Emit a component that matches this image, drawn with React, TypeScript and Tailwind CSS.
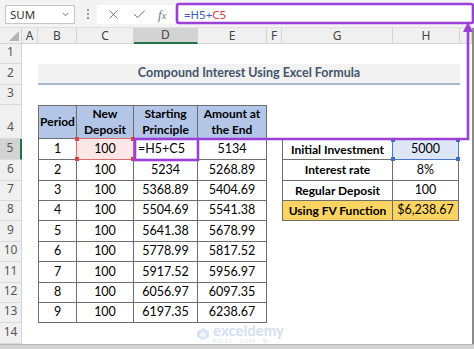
import React from "react";
import { X, Check, ChevronDown } from "lucide-react";

const font = { fontFamily: "Lato, 'Liberation Sans', sans-serif" };
const uiFont = { fontFamily: "'Noto Sans', 'Open Sans', sans-serif" };

const letters = ["A", "B", "C", "D", "E", "F", "G", "H", ""];
const colStart = [
  "col-start-2",
  "col-start-3",
  "col-start-4",
  "col-start-5",
  "col-start-6",
  "col-start-7",
  "col-start-8",
  "col-start-9",
  "col-start-10",
];
const rowStart = [
  "row-start-2",
  "row-start-3",
  "row-start-4",
  "row-start-5",
  "row-start-6",
  "row-start-7",
  "row-start-8",
  "row-start-9",
  "row-start-10",
  "row-start-11",
  "row-start-12",
  "row-start-13",
  "row-start-14",
  "row-start-15",
];

const data = [
  ["1", "100", "=H5+C5", "5134"],
  ["2", "100", "5234", "5268.89"],
  ["3", "100", "5368.89", "5404.69"],
  ["4", "100", "5504.69", "5541.38"],
  ["5", "100", "5641.38", "5678.99"],
  ["6", "100", "5778.99", "5817.52"],
  ["7", "100", "5917.52", "5956.97"],
  ["8", "100", "6056.97", "6097.35"],
  ["9", "100", "6197.35", "6238.67"],
];

const cell = "border-r border-b border-[#6e6e6e] flex items-center justify-center";

// little squares on the corners of a referenced cell
const Handles = ({ color }: { color: string }) => (
  <>
    <span className={`absolute -left-[2px] -top-[2px] w-[4px] h-[4px] ${color}`} />
    <span className={`absolute -right-[2px] -top-[2px] w-[4px] h-[4px] ${color}`} />
    <span className={`absolute -left-[2px] -bottom-[2px] w-[4px] h-[4px] ${color}`} />
    <span className={`absolute -right-[2px] -bottom-[2px] w-[4px] h-[4px] ${color}`} />
  </>
);

const Toolbar = () => (
  <div className="h-[28px] bg-[#f3f3f3] flex items-start pt-[5px] border-b border-[#e0e0e0]" style={uiFont}>
    <div className="ml-[5px] w-[70px] h-[19px] bg-white border border-[#c6c6c6] flex items-center justify-between px-[4px]">
      <span className="text-[11.5px] text-[#333]">SUM</span>
      <ChevronDown size={9} strokeWidth={2.5} className="text-[#666]" />
    </div>
    <div className="ml-[12px] mt-[4px] flex flex-col gap-[2px]">
      <span className="w-[2px] h-[2px] bg-[#9a9a9a]" />
      <span className="w-[2px] h-[2px] bg-[#9a9a9a]" />
      <span className="w-[2px] h-[2px] bg-[#9a9a9a]" />
    </div>
    <div className="ml-[8px] w-[80px] h-[19px] bg-white flex items-center pl-[9px] gap-[11px] text-[#666]">
      <X size={15} strokeWidth={1.4} />
      <Check size={15} strokeWidth={1.6} />
      <span className="text-[13px] italic text-[#777]" style={{ fontFamily: "'Liberation Serif', serif" }}>
        f<span className="text-[10px]">x</span>
      </span>
    </div>
    <div className="flex-1 h-[19px] bg-white flex items-center pl-[7px] text-[11.5px]">
      <span className="text-[#3b59c7]">=H5+</span>
      <span className="text-[#d8343d]">C5</span>
    </div>
  </div>
);

const MainTable = () => (
  <div
    className="col-start-3 col-end-7 row-start-5 row-end-15 grid grid-cols-[38px_57px_64px_69px] grid-rows-[33px_21px_21px_20px_20px_21px_20px_21px_20px_20px] border-l border-t border-[#6e6e6e] text-[12.5px] text-black"
    style={font}
  >
    {["Period", "New Deposit", "Starting Principle", "Amount at the End"].map((h, i) => (
      <div key={i} className={`${cell} bg-[#b4c6e7] font-bold text-[12px] text-center leading-[16px] px-[2px]`}>
        {h === "Amount at the End" ? (
          <span>
            Amount at
            <br />
            the End
          </span>
        ) : (
          h
        )}
      </div>
    ))}
    {data.map((row, r) =>
      row.map((v, c) => {
        if (r === 0 && c === 1)
          return (
            <div key={`${r}-${c}`} className="relative border-r border-b border-[#6e6e6e]">
              <div className="absolute inset-[-1px] border border-[#e06a6c] bg-[#fce6e6] flex items-center justify-center">
                {v}
                <Handles color="bg-[#d9434a]" />
              </div>
            </div>
          );
        if (r === 0 && c === 2)
          return (
            <div key={`${r}-${c}`} className={`${cell} !justify-start pl-[4px]`}>
              {v}
            </div>
          );
        return (
          <div key={`${r}-${c}`} className={cell}>
            {v}
          </div>
        );
      })
    )}
  </div>
);

const SideTable = () => (
  <div
    className="col-start-8 col-end-10 row-start-6 row-end-10 grid grid-cols-[110px_66px] grid-rows-[20px_21px_20px_20px] border-l border-t border-[#6e6e6e] text-[12.5px] text-black"
    style={font}
  >
    <div className={`${cell} font-bold text-[12px]`}>Initial Investment</div>
    <div className="relative border-r border-b border-[#6e6e6e]">
      <div className="absolute inset-[-1px] border border-[#4a78cf] bg-[#dde6f5] flex items-center justify-center">
        5000
        <Handles color="bg-[#3f6cc4]" />
      </div>
    </div>
    <div className={`${cell} font-bold text-[12px]`}>Interest rate</div>
    <div className={cell}>8%</div>
    <div className={`${cell} font-bold text-[12px]`}>Regular Deposit</div>
    <div className={cell}>100</div>
    <div className={`${cell} font-bold text-[12px] bg-[#fad462]`}>Using FV Function</div>
    <div className={`${cell} bg-[#fad462]`}>$6,238.67</div>
  </div>
);

const Sheet = () => (
  <div className="relative border-r-2 border-[#8c8c8c]">
    <div
      className="grid grid-cols-[22px_16px_39px_57px_64px_69px_15px_111px_67px_12px] grid-rows-[16px_20px_21px_20px_34px_21px_21px_20px_20px_21px_20px_21px_20px_20px_21px]"
      style={uiFont}
    >
      {/* corner */}
      <div className="col-start-1 row-start-1 bg-[#f0f0f0] border-r border-b border-[#d4d4d4] relative">
        <div
          className="absolute right-[2px] bottom-[2px] w-[10px] h-[10px] bg-[#b5b5b5]"
          style={{ clipPath: "polygon(100% 0, 100% 100%, 0 100%)" }}
        />
      </div>
      {letters.map((l, i) => (
        <div
          key={i}
          className={`${colStart[i]} row-start-1 flex items-center justify-center text-[12px] text-[#444] border-r border-[#d4d4d4] ${
            l === "D" ? "bg-[#d3d3d3] border-b-2 border-b-[#217346]" : "bg-[#f0f0f0] border-b border-b-[#d4d4d4]"
          }`}
        >
          {l}
        </div>
      ))}
      {rowStart.map((rs, i) => (
        <div
          key={rs}
          className={`col-start-1 ${rs} flex items-end justify-center pb-[2px] text-[12px] text-[#555] border-b border-[#dadada] ${
            i === 4 ? "bg-[#d3d3d3] border-r-2 border-r-[#217346]" : "bg-[#f0f0f0] border-r border-r-[#d4d4d4]"
          }`}
        >
          {i + 1}
        </div>
      ))}

      <div
        className="col-start-3 col-end-10 row-start-3 bg-[#f2f2f2] border-b-2 border-[#acb9ca] flex items-center justify-center font-bold text-[12.5px] text-[#44546a]"
        style={font}
      >
        Compound Interest Using Excel Formula
      </div>

      <MainTable />
      <SideTable />
    </div>

    {/* watermark */}
    <div className="absolute left-[196px] top-[295px] flex items-center gap-[3px] opacity-60 pointer-events-none" style={font}>
      <svg width="14" height="14" viewBox="0 0 14 14">
        <path d="M7 1 L13 4.5 L13 10 L7 13 L1 10 L1 4.5 Z" fill="#c3d2ec" />
        <path d="M4 6 L7 4.5 L10 6 L10 9 L7 10.5 L4 9 Z" fill="#e6edf8" />
      </svg>
      <div className="flex flex-col">
        <span className="text-[15px] leading-[15px] font-bold text-[#b8c9e8]">exceldemy</span>
        <span className="text-[5px] leading-[6px] tracking-[1px] text-[#c3cfe4]">EXCEL · DATA · BI</span>
      </div>
    </div>
  </div>
);

export default function App() {
  return (
    <div className="relative w-[474px] h-[349px] overflow-hidden bg-white">
      <Toolbar />
      <Sheet />
      <div className="h-[5px] bg-[#d2d2d2] border-t border-[#b9b9b9]" />

      {/* purple annotation */}
      <svg className="absolute inset-0 pointer-events-none" width="474" height="349">
        <rect x="177" y="4" width="296" height="19" rx="2" fill="none" stroke="#9a3fd8" strokeWidth="2.6" />
        <rect x="135" y="139" width="63" height="21" fill="none" stroke="#9a3fd8" strokeWidth="2.6" />
        <polyline points="198,139 468,139 468,30" fill="none" stroke="#9a3fd8" strokeWidth="2.6" />
        <polygon points="463,32 468,22 473,32" fill="#9a3fd8" />
      </svg>
    </div>
  );
}
